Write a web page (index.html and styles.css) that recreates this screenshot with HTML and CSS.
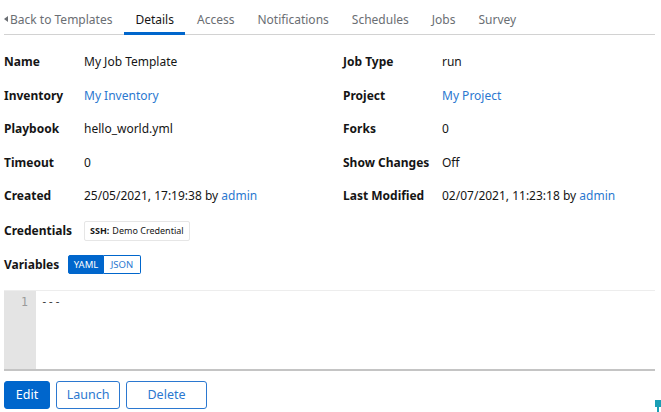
FILE: index.html
```html
<!DOCTYPE html>
<html>
<head>
<meta charset="utf-8">
<link rel="stylesheet" href="styles.css">
</head>
<body>
<div class="page">
  <nav class="tabs">
    <a class="tab back"><span class="caret"></span>Back to Templates</a>
    <a class="tab active">Details</a>
    <a class="tab">Access</a>
    <a class="tab">Notifications</a>
    <a class="tab">Schedules</a>
    <a class="tab">Jobs</a>
    <a class="tab">Survey</a>
  </nav>
  <dl class="details">
    <dt>Name</dt><dd>My Job Template</dd>
    <dt>Job Type</dt><dd>run</dd>
    <dt>Inventory</dt><dd><a class="link">My Inventory</a></dd>
    <dt>Project</dt><dd><a class="link">My Project</a></dd>
    <dt>Playbook</dt><dd>hello_world.yml</dd>
    <dt>Forks</dt><dd>0</dd>
    <dt>Timeout</dt><dd>0</dd>
    <dt>Show Changes</dt><dd>Off</dd>
    <dt>Created</dt><dd>25/05/2021, 17:19:38 by <a class="link">admin</a></dd>
    <dt>Last Modified</dt><dd>02/07/2021, 11:23:18 by <a class="link">admin</a></dd>
    <dt class="cred-label">Credentials</dt><dd class="full"><span class="chip"><b>SSH:</b> Demo Credential</span></dd>
  </dl>
  <div class="vars">
    <span class="vars-label">Variables</span>
    <div class="toggle"><span class="tbtn on">YAML</span><span class="tbtn">JSON</span></div>
  </div>
  <div class="editor">
    <div class="gutter">1</div>
    <div class="code">---</div>
  </div>
  <div class="actions">
    <button class="btn primary">Edit</button>
    <button class="btn secondary launch">Launch</button>
    <button class="btn secondary delete">Delete</button>
  </div>
  <div class="corner"></div>
</div>
</body>
</html>
```
FILE: styles.css
```css
* { box-sizing: border-box; }
html, body { margin: 0; padding: 0; background: #fff; }
body {
  font-family: "Noto Sans", "Open Sans", sans-serif;
  font-size: 12px;
  color: #151515;
  width: 661px;
  height: 412px;
  overflow: hidden;
}
.page { position: relative; padding: 0 6px 0 4px; height: 412px; }
.tabs {
  display: flex;
  height: 35px;
  padding-top: 4px;
  border-bottom: 1px solid #d2d2d2;
}
.tab {
  display: flex;
  align-items: center;
  padding: 0 11.5px;
  color: #6a6e73;
  font-size: 12px;
  position: relative;
}
.tab.back { padding-left: 0; padding-right: 11.5px; }
.caret {
  width: 0; height: 0;
  border-top: 3.5px solid transparent;
  border-bottom: 3.5px solid transparent;
  border-right: 4px solid #6a6e73;
  margin-right: 2px;
}
.tab.active { color: #151515; }
.tab.active::after {
  content: "";
  position: absolute;
  left: 0; right: 0; bottom: -1px;
  height: 3px;
  background: #06c;
}
.details {
  display: grid;
  grid-template-columns: 80px 259px 99px 1fr;
  row-gap: 15.5px;
  margin: 0;
  padding-top: 18px;
  line-height: 18px;
}
.details dt { font-weight: 700; margin: 0; }
.details dd { margin: 0; }
.details dd.full { grid-column: 2 / 5; display: flex; align-items: center; }
.cred-label { display: flex; align-items: center; }
.link { color: #2b78d0; }
.chip {
  display: inline-flex;
  align-items: center;
  height: 20px;
  padding: 0 5px;
  border: 1px solid #e6e6e6;
  border-radius: 2px;
  font-size: 9px;
  color: #151515;
}
.chip b { margin-right: 3px; }
.vars {
  display: flex;
  align-items: center;
  margin-top: 14px;
  height: 20px;
}
.vars-label { font-weight: 700; width: 64px; }
.toggle { display: flex; height: 19px; }
.tbtn {
  display: flex;
  align-items: center;
  justify-content: center;
  font-size: 9.5px;
  border: 1px solid #06c;
  color: #2b78d0;
  width: 37px;
}
.tbtn.on { background: #06c; color: #fff; border-radius: 2px 0 0 2px; width: 36px; }
.tbtn:last-child { border-left: none; border-radius: 0 2px 2px 0; }
.editor {
  display: flex;
  margin-top: 15px;
  height: 81px;
  border-top: 1px solid #ededed;
  border-bottom: 2px solid #c4c4c4;
}
.gutter {
  width: 32px;
  background: #e4e4e4;
  color: #9a9a9a;
  font-family: "DejaVu Sans Mono", monospace;
  font-size: 11.5px;
  text-align: right;
  padding: 4px 8px 0 0;
}
.code {
  font-family: "DejaVu Sans Mono", monospace;
  font-size: 11px;
  padding: 4px 0 0 5px;
  color: #333;
}
.actions { display: flex; gap: 6px; margin-top: 10px; }
.btn {
  height: 28px;
  border-radius: 3px;
  font-family: inherit;
  font-size: 12.5px;
  padding: 0;
  background: #fff;
}
.primary { background: #06c; color: #fff; border: 1px solid #06c; width: 46px; }
.secondary { border: 1px solid #2b78d0; color: #2b78d0; }
.launch { width: 64px; }
.delete { width: 81px; }
.corner {
  position: absolute;
  right: 0; bottom: 0;
  width: 6px; height: 12px;
  background: linear-gradient(#1a9fb5, #1a9fb5) 0 0 / 6px 7px no-repeat,
              linear-gradient(#1a9fb5, #1a9fb5) 2px 0 / 2px 12px no-repeat;
}
```
